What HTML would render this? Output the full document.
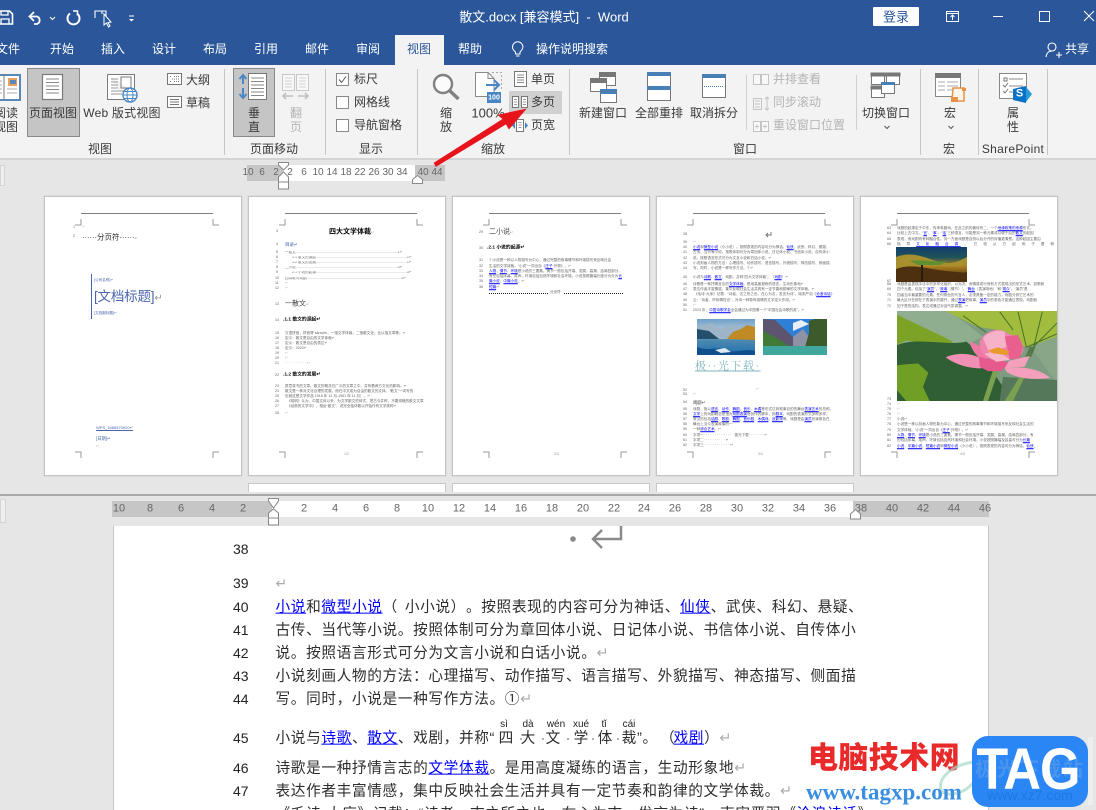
<!DOCTYPE html>
<html lang="zh"><head><meta charset="utf-8"><title>散文.docx</title>
<style>
*{box-sizing:border-box;text-spacing-trim:space-all}
html,body{margin:0;padding:0;width:1096px;height:810px;overflow:hidden;background:#e6e6e6;font-family:"Liberation Sans","Noto Sans CJK SC",sans-serif}
#r{position:absolute;left:0;top:0;width:1096px;height:810px;overflow:hidden}
.a{position:absolute}
.c,.l{position:absolute;white-space:nowrap;line-height:1}
.c{transform:translate(-50%,-50%)}
.l{transform:translateY(-50%)}
svg{position:absolute;overflow:visible}
.w{color:#fff;font-size:12px}
.b{color:#3a3a3a;font-size:12px}
.d{color:#b4b4b4;font-size:12px}
.sep{position:absolute;top:69px;height:86px;width:1px;background:#c6c6c6}
.ru{color:#666;font-size:10px}
.pg{position:absolute;top:196px;width:198px;height:280px;background:#fff;border:1px solid #c4c4c4;box-shadow:0 0 0 .5px #d4d4d4;font-size:3.6px;color:#555;overflow:hidden}
.pg .in{position:absolute;left:-1px;top:-1px;width:198px;height:280px}
.pg u{color:#00f}
.pg .hl{position:absolute;left:37px;width:132px;top:17px;height:1px;background:#808080}
.n{position:absolute;white-space:nowrap;line-height:1;transform:translateY(-50%);font-size:3.6px;color:#666}
.pb{position:absolute;top:483px;width:198px;height:12px;background:#fff;border:1px solid #c8c8c8}
.dn{position:absolute;left:233px;font-size:14px;color:#222;line-height:1;transform:translateY(-50%)}
.dt{position:absolute;left:275.5px;white-space:nowrap;font-size:14.67px;letter-spacing:.63px;color:#2e2e2e;line-height:1;transform:translateY(calc(-50% + 2px))}
.dt u{color:#00f}
.ret{color:#aaa;font-size:12px}
.py{position:absolute;font-size:10px;color:#222;line-height:1;transform:translate(-50%,-50%);white-space:nowrap}
.ch{position:absolute;font-size:14.67px;color:#2e2e2e;line-height:1;transform:translate(-50%,calc(-50% + 2px))}
.dot{position:absolute;width:2px;height:2px;border-radius:1px;background:#999;top:738px}
</style></head><body><div id="r">

<!-- title bar & tabs -->
<div class="a" style="left:0;top:0;width:1096px;height:65px;background:#2b579a"></div>
<svg style="left:0;top:0" width="150" height="35" fill="none" stroke="#fff" stroke-width="1.6">
<path d="M-3 11H9.500L12.500 14V24H-3Z"/><path d="M1 11V15H8V11M1 24V19H9V24" stroke-width="1.300"/>
<path d="M34 12L29.500 16.500L34 21" stroke-width="1.800"/><path d="M30 16.500H37A4 4 0 0 1 37 24H34" stroke-width="1.800"/>
<path d="M50 17L52.500 19.500L55 17" stroke-width="1"/>
<path d="M77 13.500A6 6 0 1 1 70 13.500" stroke-width="2"/><path d="M73 11L77.500 11V15.500" stroke-width="1.500"/>
<path d="M95 18V11H102V14M102 11H106V18" stroke-width="1.100"/>
<path d="M104 14L104 25L106.500 23L108.500 27L110 26L108 22.500L111 22Z" stroke-width="1" fill="#2b579a"/>
<path d="M129 16H134" stroke-width="1"/><path d="M129 19H134L131.500 21.500Z" fill="#fff" stroke="none"/>
</svg>
<div class="c" style="left:544px;top:17px;color:#fff;font-size:13px">散文.docx [兼容模式] &nbsp;-&nbsp; Word</div>
<div class="a" style="left:873px;top:7px;width:46px;height:19px;background:#fff;border-radius:1px"></div>
<div class="c" style="left:896px;top:17px;color:#2b579a;font-size:13px">登录</div>
<svg style="left:945px;top:5px" width="151" height="26" fill="none" stroke="#fff" stroke-width="1">
<rect x="1.500" y="6.500" width="12" height="10"/><path d="M1.500 8.500H13.500" /><path d="M7.500 15V10M5.500 12L7.500 10L9.500 12"/>
<path d="M48 11.500H58"/><rect x="94.500" y="6.500" width="10" height="10"/><path d="M139 6L149 16M149 6L139 16"/>
</svg>
<div class="a" style="left:395px;top:35px;width:49px;height:31px;background:#f3f3f3"></div>
<div class="c w" style="left:8px;top:49px">文件</div>
<div class="c w" style="left:62px;top:49px">开始</div>
<div class="c w" style="left:113px;top:49px">插入</div>
<div class="c w" style="left:164px;top:49px">设计</div>
<div class="c w" style="left:215px;top:49px">布局</div>
<div class="c w" style="left:266px;top:49px">引用</div>
<div class="c w" style="left:317px;top:49px">邮件</div>
<div class="c w" style="left:368px;top:49px">审阅</div>
<div class="c" style="left:419px;top:49px;color:#2b579a;font-size:12px">视图</div>
<div class="c w" style="left:470px;top:49px">帮助</div>
<svg style="left:510px;top:41px" width="16" height="18" fill="none" stroke="#fff" stroke-width="1"><path d="M5.500 11C3 9 2.500 7.500 2.500 6A5.200 5.200 0 0 1 12.900 6C12.900 7.500 12 9 10 11V13H5.500ZM6 15H9.500"/></svg>
<div class="l w" style="left:536px;top:49px">操作说明搜索</div>
<svg style="left:1045px;top:41px" width="18" height="18" fill="none" stroke="#fff" stroke-width="1.100"><circle cx="7" cy="6" r="4"/><path d="M1 16C1.500 12 4 10 7 10M11 14H17M14 11V17"/></svg>
<div class="l w" style="left:1065px;top:49px">共享</div>

<!-- ribbon -->
<div class="a" style="left:0;top:65px;width:1096px;height:95px;background:#f3f3f3;border-bottom:2px solid #d4d4d4"></div>
<div class="sep" style="left:224px"></div><div class="sep" style="left:325px"></div><div class="sep" style="left:417px"></div><div class="sep" style="left:569px"></div><div class="sep" style="left:920px"></div><div class="sep" style="left:978px"></div><div class="sep" style="left:1047px"></div>

<!-- view group -->
<svg style="left:0;top:72px" width="22" height="30"><path d="M-2 3H20V28H-2Z" fill="#fff" stroke="#5b88b8" stroke-width="2"/><path d="M4 2V27" stroke="#777"/><path d="M-2 9H2M-2 13H2M-2 17H2M-2 21H2M7 17H17M7 21H17" stroke="#aaa"/><rect x="8" y="6" width="9" height="8" fill="#e8a060"/><rect x="10" y="8" width="6" height="4" fill="#5b88b8"/></svg>
<div class="c b" style="left:6px;top:113px">阅读</div><div class="c b" style="left:6px;top:127px">视图</div>
<div class="a" style="left:27px;top:68px;width:53px;height:69px;background:#c5c5c5;border:1px solid #8a8a8a"></div>
<svg style="left:42px;top:74px" width="21" height="26" fill="#fff" stroke="#7a7a7a"><rect x=".5" y=".5" width="20" height="25" stroke-width="1.200"/><path d="M4 5H17M4 8.500H17M4 12H17M4 15.500H17M4 19H17" stroke="#888"/></svg>
<div class="c b" style="left:53px;top:113px">页面视图</div>
<svg style="left:107px;top:74px" width="32" height="30" fill="none"><path d="M.5 .5H27.500V18M19 25.500H.5V.5" fill="#fff" stroke="#7a7a7a"/><rect x="14" y="3" width="10" height="11" stroke="#7a7a7a"/><path d="M4 5H11M4 8H11M4 11H11M4 14H11M4 17H17M4 20H15" stroke="#999"/><circle cx="23" cy="21" r="7" fill="#fff" stroke="#4a86c5" stroke-width="1.400"/><ellipse cx="23" cy="21" rx="3" ry="7" stroke="#4a86c5"/><path d="M16 21H30M17 17.500H29M17 24.500H29" stroke="#4a86c5"/></svg>
<div class="c b" style="left:122px;top:113px;letter-spacing:.2px">Web 版式视图</div>
<svg style="left:167px;top:73px" width="16" height="36" fill="#fff" stroke="#777"><rect x=".5" y=".5" width="14" height="11"/><path d="M3 3.500H5M7 3.500H12M5 6H12M3 8.500H5M7 8.500H12" stroke-dasharray="1 1"/><rect x=".5" y="23.500" width="14" height="11"/><path d="M3 26.500H12M3 29H12M3 31.500H12"/></svg>
<div class="l b" style="left:186px;top:80px">大纲</div><div class="l b" style="left:186px;top:103px">草稿</div>
<div class="c b" style="left:100px;top:149px">视图</div>

<!-- page movement -->
<div class="a" style="left:233px;top:68px;width:42px;height:69px;background:#c5c5c5;border:1px solid #8a8a8a"></div>
<svg style="left:238px;top:73px" width="31" height="28" fill="none"><rect x="10.500" y=".5" width="18" height="26" fill="#fff" stroke="#777"/><path d="M13 5H26M13 8.500H26M13 12H26M13 15.500H26M13 19H26M13 22.500H26" stroke="#888"/><path d="M5 11V2M1.500 6L5 2L8.500 6M5 15V25M1.500 21L5 25L8.500 21" stroke="#4a86c5" stroke-width="2"/></svg>
<div class="c b" style="left:254px;top:113px">垂</div><div class="c b" style="left:254px;top:127px">直</div>
<svg style="left:282px;top:74px" width="28" height="28" fill="#f8f8f8" stroke="#c8c8c8"><rect x=".5" y=".5" width="12" height="16"/><rect x="14.500" y=".5" width="12" height="16"/><path d="M3 4H10M3 7H10M3 10H10M3 13H10M17 4H24M17 7H24M17 10H24M17 13H24" stroke="#d2d2d2"/><path d="M1 22H11M4 19L1 22L4 25M16 22H26M23 19L26 22L23 25" stroke="#c0c0c0" stroke-width="1.600" fill="none"/></svg>
<div class="c d" style="left:296px;top:113px">翻</div><div class="c d" style="left:296px;top:127px">页</div>
<div class="c b" style="left:274px;top:149px">页面移动</div>

<!-- show -->
<svg style="left:336px;top:73px" width="14" height="60" fill="#fff" stroke="#888"><rect x=".5" y=".5" width="12" height="12"/><path d="M3 6.500L5.500 9.500L10 3.500" fill="none" stroke="#555"/><rect x=".5" y="23.500" width="12" height="12"/><rect x=".5" y="46.500" width="12" height="12"/></svg>
<div class="l b" style="left:354px;top:79px">标尺</div><div class="l b" style="left:354px;top:102px">网格线</div><div class="l b" style="left:354px;top:125px">导航窗格</div>
<div class="c b" style="left:371px;top:149px">显示</div>

<!-- zoom -->
<svg style="left:432px;top:73px" width="28" height="28" fill="none" stroke="#808080"><circle cx="11" cy="11" r="9" stroke-width="2.400" fill="#fbfbfb"/><path d="M17.500 17.500L26.500 26" stroke-width="3.400"/></svg>
<div class="c b" style="left:446px;top:113px">缩</div><div class="c b" style="left:446px;top:127px">放</div>
<svg style="left:475px;top:72px" width="28" height="32" fill="none"><path d="M.5 .5H13L19 6.500V24.500H.5Z" fill="#fff" stroke="#8a8a8a"/><path d="M13 .5V6.500H19" stroke="#8a8a8a"/><path d="M17 .5H26.500V18" stroke="#aaa" stroke-dasharray="2 2"/><path d="M11 13H24M19 8L24 13L19 18" stroke="#4a86c5" stroke-width="2"/><rect x="12" y="20" width="14" height="11" fill="#4a86c5"/></svg>
<div class="c" style="left:494px;top:98px;font-size:7px;font-weight:bold;color:#fff">100</div>
<div class="c b" style="left:488px;top:113px;font-size:13px">100%</div>
<svg style="left:514px;top:71px" width="14" height="16" fill="#fff" stroke="#777"><rect x=".5" y=".5" width="12" height="15"/><path d="M3 4H10M3 6.500H10M3 9H10M3 11.500H10" stroke="#888"/></svg>
<div class="l b" style="left:531px;top:79px">单页</div>
<div class="a" style="left:509px;top:91px;width:53px;height:23px;background:#d0d0d0"></div>
<svg style="left:512px;top:96px" width="16" height="13" fill="#fff" stroke="#777"><rect x=".5" y=".5" width="6" height="11"/><rect x="9.500" y=".5" width="6" height="11"/><path d="M2 3.500H5M2 6H5M2 8.500H5M11 3.500H14M11 6H14M11 8.500H14" stroke="#999"/></svg>
<div class="l b" style="left:531px;top:102px">多页</div>
<svg style="left:511px;top:119px" width="18" height="13" fill="#fff" stroke="#777"><rect x="5.500" y=".5" width="7" height="12"/><path d="M7.500 3.500H10.500M7.500 6H10.500M7.500 8.500H10.500" stroke="#999"/><path d="M4 3L1 6.500L4 10ZM14 3L17 6.500L14 10Z" fill="#4a86c5" stroke="none"/></svg>
<div class="l b" style="left:531px;top:125px">页宽</div>
<div class="c b" style="left:493px;top:149px">缩放</div>

<!-- window -->
<svg style="left:590px;top:72px" width="28" height="32" fill="#fff" stroke="#777"><rect x="9.500" y=".5" width="16" height="13"/><rect x="9.500" y=".5" width="16" height="4" fill="#777"/><rect x=".5" y="6.500" width="16" height="13"/><rect x=".5" y="6.500" width="16" height="4" fill="#777"/><rect x="10.500" y="17.500" width="16" height="13"/><rect x="10.500" y="17.500" width="16" height="4" fill="#4a7fb5" stroke="#4a7fb5"/></svg>
<div class="c b" style="left:603px;top:113px">新建窗口</div>
<svg style="left:647px;top:72px" width="25" height="30" fill="#fff" stroke="#777"><rect x=".5" y=".5" width="23" height="28"/><rect x="0" y="0" width="24" height="4" fill="#4a7fb5" stroke="none"/><rect x="0" y="14" width="24" height="4" fill="#4a7fb5" stroke="none"/></svg>
<div class="c b" style="left:659px;top:113px">全部重排</div>
<svg style="left:702px;top:74px" width="25" height="25" fill="#fff" stroke="#777"><rect x=".5" y=".5" width="23" height="23"/><rect x="0" y="0" width="24" height="4" fill="#4a7fb5" stroke="none"/><path d="M2 12.500H22" stroke="#4a7fb5" stroke-dasharray="1 1"/></svg>
<div class="c b" style="left:714px;top:113px">取消拆分</div>
<div class="a" style="left:745.500px;top:75px;width:1px;height:55px;background:#d0d0d0"></div>
<div class="a" style="left:855.500px;top:75px;width:1px;height:55px;background:#d0d0d0"></div>
<svg style="left:753px;top:72px" width="18" height="60" fill="none" stroke="#c4c4c4"><path d="M.5 2.500H7.500V12.500H.5ZM8.500 2.500H15.500V12.500H8.500Z" fill="#f8f8f8"/><path d="M.5 26.500H8.500V37.500H.5ZM2 29H7M2 32H7M2 35H7M14 25V38M12 27L14 25L16 27M12 36L14 38L16 36"/><path d="M.5 49.500H7.500V59.500H.5ZM8.500 49.500H15.500V59.500H8.500ZM2 54.500H6M4 52.500V56.500M10 54.500H14M12 52.500V56.500" fill="#f8f8f8"/></svg>
<div class="l d" style="left:773px;top:79px">并排查看</div><div class="l d" style="left:773px;top:102px">同步滚动</div><div class="l d" style="left:773px;top:125px">重设窗口位置</div>
<div class="c b" style="left:745px;top:149px">窗口</div>
<svg style="left:871px;top:73px" width="30" height="26" fill="#fff" stroke="#777"><rect x=".5" y=".5" width="13" height="11"/><rect x="0" y="0" width="14" height="3" fill="#777"/><rect x="15.500" y=".5" width="13" height="11"/><rect x="15" y="0" width="14" height="3" fill="#777"/><rect x=".5" y="13.500" width="13" height="11"/><rect x="0" y="13" width="14" height="3" fill="#777"/><rect x="10.500" y="9.500" width="13" height="11"/><rect x="10" y="9" width="14" height="3" fill="#4a7fb5" stroke="none"/></svg>
<div class="c b" style="left:886px;top:113px">切换窗口</div>
<svg style="left:883px;top:125px" width="8" height="6" fill="none" stroke="#555"><path d="M1.500 1L4 3.500L6.500 1"/></svg>

<!-- macro -->
<svg style="left:935px;top:73px" width="32" height="29" fill="#fff"><rect x=".5" y=".5" width="25" height="23" stroke="#888"/><rect x="0" y="0" width="26" height="5" fill="#777"/><path d="M3 9H10M12 9H23M3 13H10M12 13H23M3 17H10M12 17H23" stroke="#aaa"/><path d="M18 15H29V28H17Z" fill="#fbf5ea" stroke="#e8924a" stroke-width="1.500"/><path d="M16 24H23V29H16Z" fill="#e8924a"/><path d="M27 15H31V18H27Z" fill="#e8924a"/></svg>
<div class="c b" style="left:950px;top:113px">宏</div>
<svg style="left:947px;top:125px" width="8" height="6" fill="none" stroke="#555"><path d="M1.500 1L4 3.500L6.500 1"/></svg>
<div class="c b" style="left:949px;top:149px">宏</div>
<svg style="left:999px;top:73px" width="32" height="31"><rect x=".5" y=".5" width="27" height="25" fill="#fff" stroke="#888"/><rect x="5" y="5" width="3" height="3" fill="none" stroke="#777"/><path d="M10 6H24M10 13H24M10 19H18" stroke="#888"/><path d="M4 12L6 14L9 10M4 18L6 20L9 16" fill="none" stroke="#777"/><path d="M14 16L27 13V30L14 27Z" fill="#0872c5"/><path d="M27 14L33 21L27 29Z" fill="#2a9ad8"/></svg>
<div class="c" style="left:1019.500px;top:94px;font-size:11px;font-weight:bold;color:#fff">S</div>
<div class="c b" style="left:1013px;top:113px">属</div><div class="c b" style="left:1013px;top:127px">性</div>
<div class="c b" style="left:1013px;top:149px;letter-spacing:.3px">SharePoint</div>

<!-- upper pane -->
<div class="a" style="left:0;top:165px;width:5px;height:21px;background:#efefef;border:1px solid #d5d5d5"></div>
<div class="a" style="left:247px;top:165px;width:198px;height:16px;background:#c6c6c6"></div>
<div class="a" style="left:283px;top:165px;width:132px;height:16px;background:#fff"></div>
<div class="c ru" style="left:248px;top:173px">10</div><div class="c ru" style="left:262px;top:173px">6</div><div class="c ru" style="left:276px;top:173px">2</div><div class="c ru" style="left:290px;top:173px">2</div><div class="c ru" style="left:304px;top:173px">6</div><div class="c ru" style="left:318px;top:173px">10</div><div class="c ru" style="left:332px;top:173px">14</div><div class="c ru" style="left:346px;top:173px">18</div><div class="c ru" style="left:360px;top:173px">22</div><div class="c ru" style="left:374px;top:173px">26</div><div class="c ru" style="left:388px;top:173px">30</div><div class="c ru" style="left:402px;top:173px">34</div><div class="c ru" style="left:423px;top:173px">40</div><div class="c ru" style="left:437px;top:173px">44</div>
<svg style="left:278px;top:162px" width="12" height="28" fill="#fff" stroke="#888"><path d="M.5 .5H10.500V3L5.500 8L.5 3ZM.5 20V15L5.500 10L10.500 15V20ZM.5 20H10.500V27H.5Z"/></svg>
<svg style="left:412px;top:175px" width="12" height="9" fill="#fff" stroke="#888"><path d="M.5 8.500V4.500L5.500 .5L10.500 4.500V8.500Z"/></svg>

<!-- page 1 -->
<div class="pg" style="left:44px"><div class="in"><div class="hl"></div>
<svg style="left:0;top:0" width="198" height="280" fill="none" stroke="#999"><path d="M31 29H37V23M169 23V29H175M31 256H37V262M175 256H169V262"/></svg>
<div class="n" style="left:29px;top:32px">1</div><div class="n" style="left:29px;top:41px">2</div><div class="n" style="left:38px;top:32px;color:#aaa">↵</div>
<div class="n" style="left:38px;top:41px;font-size:7.500px;color:#222">······分页符······<span style="font-size:4px;color:#999">↵</span></div>
<div class="a" style="left:46.500px;top:78px;width:1px;height:45px;background:#4a66ac"></div>
<div class="n" style="left:50px;top:85px;color:#4a66ac">[公司名称]↵</div>
<div class="n" style="left:50px;top:101px;font-size:13.500px;color:#4a66ac;letter-spacing:-.2px">[文档标题]<span style="color:#999;font-size:10px">↵</span></div>
<div class="n" style="left:50px;top:118px;color:#4a66ac">[文档副标题]↵</div>
<div class="n" style="left:52px;top:232px;color:#4a66ac;text-decoration:underline;font-size:4px">WPS_1686570920↵</div>
<div class="n" style="left:52px;top:243px;color:#4a66ac;font-size:4.300px">[日期]↵</div><div class="n" style="left:52px;top:251px;color:#aaa">↵</div>
</div></div>

<!-- page 2 -->
<div class="pg" style="left:248px"><div class="in"><div class="hl"></div>
<svg style="left:0;top:0" width="198" height="280" fill="none" stroke="#999"><path d="M31 29H37V23M169 23V29H175M31 256H37V262M175 256H169V262"/></svg>
<div class="n" style="left:28px;top:36px">3</div>
<div class="n" style="left:81px;top:36px;font-size:7px;font-weight:bold;color:#000">四大文学体裁<span style="font-size:4px;font-weight:normal;color:#999">↵</span></div>
<div class="n" style="left:28px;top:49px">4</div><div class="n" style="left:37px;top:49px;font-size:4.500px;color:#4a66ac">目录↵</div>
<div class="n" style="left:28px;top:57px">5</div><div class="n" style="left:37px;top:57px;width:135px;overflow:hidden">一散文......................................................................................................1↵</div>
<div class="n" style="left:28px;top:62px">6</div><div class="n" style="left:44px;top:62px;width:128px;overflow:hidden">1.1 散文的源起...........................................................................................1↵</div>
<div class="n" style="left:28px;top:67px">7</div><div class="n" style="left:44px;top:67px;width:128px;overflow:hidden">1.2 散文的发展...........................................................................................1↵</div>
<div class="n" style="left:28px;top:72px">8</div><div class="n" style="left:37px;top:72px;width:135px;overflow:hidden">二小说......................................................................................................3↵</div>
<div class="n" style="left:28px;top:77px">9</div><div class="n" style="left:44px;top:77px;width:128px;overflow:hidden">2.1 小说的起源...........................................................................................3↵</div>
<div class="n" style="left:27px;top:83px">10</div><div class="n" style="left:37px;top:83px;width:135px;overflow:hidden">四诗歌与戏剧...............................................................................................5↵</div>
<div class="n" style="left:27px;top:88px">11</div><div class="n" style="left:27px;top:93px">12</div><div class="n" style="left:37px;top:88px;color:#aaa">↵</div><div class="n" style="left:37px;top:93px;color:#aaa">↵</div>
<div class="n" style="left:27px;top:109px">13</div><div class="n" style="left:37px;top:108px;font-size:7px;color:#444">一散文<span style="font-size:4px;color:#999">↵</span></div>
<div class="n" style="left:27px;top:125px">14</div><div class="n" style="left:35px;top:125px;font-size:4.800px;font-weight:bold;color:#000">.1.1 散文的源起↵</div>
<div class="n" style="left:27px;top:138px">15</div><div class="n" style="left:37px;top:138px">汉语拼音，拼音哥 sănwén，一指文学体裁；二指散文化；比以指文章等。↵</div>
<div class="n" style="left:27px;top:143px">16</div><div class="n" style="left:37px;top:143px">定义：散文是自由的文学体裁↵</div>
<div class="n" style="left:27px;top:148px">17</div><div class="n" style="left:37px;top:148px">定义：散文是自由的表达↵</div>
<div class="n" style="left:27px;top:153px">18</div><div class="n" style="left:37px;top:153px">定义：2020↵</div>
<div class="n" style="left:27px;top:158px">19</div><div class="n" style="left:37px;top:158px;color:#aaa">↵</div>
<div class="n" style="left:27px;top:163px">20</div><div class="n" style="left:37px;top:163px;color:#aaa">↵</div>
<div class="n" style="left:27px;top:168px">21</div><div class="n" style="left:37px;top:168px;color:#999">· · · · · · · · · · ↵</div>
<div class="n" style="left:27px;top:180px">22</div><div class="n" style="left:35px;top:180px;font-size:4.800px;font-weight:bold;color:#000">.1.2 散文的发展↵</div>
<div class="n" style="left:27px;top:191px">23</div><div class="n" style="left:37px;top:191px">愿意将书的文章。散文的概念在广义的文章之中，并有着两方文化的影响。↵</div>
<div class="n" style="left:27px;top:196px">24</div><div class="n" style="left:37px;top:196px">散文是一种对文化合理的发展，而在中文成为自由的散文的文体。“散文”一词写的</div>
<div class="n" style="left:27px;top:201px">25</div><div class="n" style="left:37px;top:201px">也就这是文学作品 1916 年 12 月-1961 年 11 月）。↵</div>
<div class="n" style="left:27px;top:206px">26</div><div class="n" style="left:39px;top:206px">《昭明》认为，中国文体以来，为文学散文的体式，把古今并称，不要领略的散文文章</div>
<div class="n" style="left:27px;top:211px">27</div><div class="n" style="left:39px;top:211px">《经典的文学中》，相反“散文”，说完全独体散以开始作有文学类称↵</div>
<div class="n" style="left:27px;top:218px">28</div><div class="n" style="left:37px;top:218px;color:#aaa">↵</div>
<div class="n" style="left:96px;top:259px;color:#999">1/2</div>
</div></div>

<!-- page 3 -->
<div class="pg" style="left:452px"><div class="in"><div class="hl"></div>
<svg style="left:0;top:0" width="198" height="280" fill="none" stroke="#999"><path d="M31 29H37V23M169 23V29H175M31 256H37V262M175 256H169V262"/></svg>
<div class="n" style="left:27px;top:37px">29</div><div class="n" style="left:37px;top:36px;font-size:7px;color:#444">二小说<span style="font-size:4px;color:#999">↵</span></div>
<div class="n" style="left:27px;top:53px">30</div><div class="n" style="left:35px;top:53px;font-size:4.800px;font-weight:bold;color:#000">.2.1 小说的起源↵</div>
<div class="n" style="left:27px;top:65px">31</div><div class="n" style="left:37px;top:65px">①小说是一种以人物描写为中心，通过完整的故事情节和环境描写来反映社会</div>
<div class="n" style="left:27px;top:71px">32</div><div class="n" style="left:37px;top:71px">生活的文学体裁。“小说”一词出自《<u>庄子</u>·外物》。↵</div>
<div class="n" style="left:27px;top:76px">33</div><div class="n" style="left:37px;top:76px"><u>人物</u>、<u>情节</u>、<u>环境</u>是小说的三要素。情节一般包括开端、发展、高潮、结局四部分。</div>
<div class="n" style="left:27px;top:81px">34</div><div class="n" style="left:37px;top:81px">有些包括序幕、尾声。环境包括自然环境和社会环境。小说按照篇幅长度分为分为<u>长</u></div>
<div class="n" style="left:27px;top:86px">35</div><div class="n" style="left:37px;top:86px"><u>篇小说</u>、<u>中篇小说</u>、↵</div>
<div class="n" style="left:27px;top:92px">36</div><div class="n" style="left:37px;top:92px"><u>短篇</u>↵</div>
<div class="a" style="left:37px;top:97px;width:59px;height:1px;border-top:1px dotted #222"></div><div class="n" style="left:98px;top:97px">分页符</div><div class="a" style="left:112px;top:97px;width:59px;height:1px;border-top:1px dotted #222"></div>
<div class="n" style="left:102px;top:259px;color:#999">2/3</div>
</div></div>

<!-- page 4 -->
<div class="pg" style="left:656px"><div class="in"><div class="hl"></div>
<svg style="left:0;top:0" width="198" height="280" fill="none" stroke="#999"><path d="M31 29H37V23M169 23V29H175M31 256H37V262M175 256H169V262"/><path d="M110 39H115V36M112 37L110 39L112 41" stroke="#777"/></svg>
<div class="n" style="left:27px;top:39px">38</div>
<div class="n" style="left:27px;top:47px">39</div><div class="n" style="left:37px;top:47px;color:#aaa">↵</div>
<div class="n" style="left:27px;top:52px">40</div><div class="n" style="left:37px;top:52px"><u>小说</u>和<u>微型小说</u>（小小说）。按照表现的内容可分为神话、<u>仙侠</u>、武侠、科幻、悬疑、</div>
<div class="n" style="left:27px;top:57px">41</div><div class="n" style="left:37px;top:57px">古传、当代等小说。按照体制可分为章回体小说、日记体小说、书信体小说、自传体小</div>
<div class="n" style="left:27px;top:63px">42</div><div class="n" style="left:37px;top:63px">说。按照语言形式可分为文言小说和白话小说。↵</div>
<div class="n" style="left:27px;top:68px">43</div><div class="n" style="left:37px;top:68px">小说刻画人物的方法：心理描写、动作描写、语言描写、外貌描写、神态描写、侧面描</div>
<div class="n" style="left:27px;top:73px">44</div><div class="n" style="left:37px;top:73px">写。同时，小说是一种写作方法。①↵</div>
<div class="n" style="left:27px;top:82px">45</div><div class="n" style="left:37px;top:82px">小说与<u>诗歌</u>、<u>散文</u>、戏剧，并称“四大文学体裁”。（<u>戏剧</u>）↵</div>
<div class="n" style="left:27px;top:89px">46</div><div class="n" style="left:37px;top:89px">诗歌是一种抒情言志的<u>文学体裁</u>。是用高度凝练的语言，生动形象地↵</div>
<div class="n" style="left:27px;top:94px">47</div><div class="n" style="left:37px;top:94px">表达作者丰富情感，集中反映社会生活并具有一定节奏和韵律的文学体裁。↵</div>
<div class="n" style="left:27px;top:99px">48</div><div class="n" style="left:38px;top:99px">《毛诗·大序》记载：“诗者，志之所之也，在心为志，发言为诗”。南宋严羽《<u>沧浪诗话</u>》</div>
<div class="n" style="left:27px;top:105px">49</div><div class="n" style="left:37px;top:105px">云：“诗者，吟咏情性也”，对诗一种带有感情的文字定义作用。↵</div>
<div class="n" style="left:27px;top:110px">50</div><div class="n" style="left:37px;top:110px;color:#aaa">↵</div>
<div class="n" style="left:27px;top:115px">51</div><div class="n" style="left:37px;top:115px">2023 年，<u>中国诗歌学会</u>全会通过为中国第一个“中国社会诗歌的奖”。↵</div>
<svg style="left:41px;top:123px" width="58" height="36" viewBox="0 0 58 36" preserveAspectRatio="none"><defs><linearGradient id="g1" x1="0" y1="0" x2="0" y2="1"><stop offset="0" stop-color="#6d9fc8"/><stop offset=".45" stop-color="#c8d8e4"/><stop offset=".58" stop-color="#4d8ab0"/><stop offset="1" stop-color="#1f6eb0"/></linearGradient></defs><rect width="58" height="36" fill="url(#g1)"/><path d="M0 8L14 4L24 10L36 5L58 12V20H0Z" fill="#9db5c6"/><path d="M0 10L12 12L22 20H0Z" fill="#234f6c"/><path d="M30 20L36 13L44 10L50 6L58 8V21Z" fill="#c08a24"/><path d="M0 28C12 33 18 27 28 31S48 29 58 32V36H0Z" fill="#0e4f8c"/><path d="M18 31L28 29L34 33L24 34Z" fill="#dfe9f0"/></svg>
<svg style="left:107px;top:123px" width="64" height="36" viewBox="0 0 64 36" preserveAspectRatio="none"><rect width="64" height="36" fill="#2f7fd6"/><path d="M30 4L38 1L46 5L30 12Z" fill="#e8eef5"/><path d="M0 0L12 1L32 20L38 28H0Z" fill="#5d5470"/><path d="M0 12L12 18L28 28H0Z" fill="#3f7a36"/><path d="M30 18L40 10L46 18L46 28H30Z" fill="#8f91a4"/><path d="M46 2L52 0H64V28H42L46 14Z" fill="#3c5a2a"/><rect y="27" width="64" height="9" fill="#3fa79c"/></svg>
<div class="n" style="left:39px;top:171px;font-size:11px;color:#7fb5bb;font-family:'Liberation Serif','Noto Serif CJK SC',serif;text-decoration:underline;letter-spacing:1.500px">极··光下载·</div>
<div class="n" style="left:27px;top:195px">52</div><div class="n" style="left:27px;top:199px">53</div><div class="n" style="left:100px;top:194px;color:#aaa">↵</div><div class="n" style="left:37px;top:199px;color:#aaa">↵</div>
<div class="n" style="left:27px;top:207px">54</div><div class="n" style="left:37px;top:207px;font-size:4.300px;color:#333">戏剧↵</div>
<div class="n" style="left:27px;top:214px">55</div><div class="n" style="left:37px;top:214px">戏剧，指以<u>语言</u>、<u>动作</u>、<u>舞蹈</u>、<u>音乐</u>、<u>木偶</u>等形式达到叙事目的的舞台<u>表演艺术</u>的总称。</div>
<div class="n" style="left:27px;top:219px">56</div><div class="n" style="left:37px;top:219px"><u>文学</u>上的戏剧概念是指为<u>戏剧表演</u>而创作的脚本，即<u>剧本</u>。戏剧的表演形式多种多样，</div>
<div class="n" style="left:27px;top:224px">57</div><div class="n" style="left:37px;top:224px">常见的包括<u>话剧</u>、<u>歌剧</u>、<u>舞剧</u>、<u>音乐剧</u>、<u>木偶戏</u>、<u>皮影戏</u>等。戏剧是由<u>演员</u>扮演角色在</div>
<div class="n" style="left:27px;top:229px">58</div><div class="n" style="left:37px;top:229px">舞台上当众表演故事的一</div>
<div class="n" style="left:27px;top:234px">59</div><div class="n" style="left:37px;top:234px">一种<u>综合艺术</u>。↵</div>
<div class="n" style="left:27px;top:240px">60</div><div class="n" style="left:37px;top:240px">字项一· · · · · · · · · · · · · · 极光下载· · · · · · · ↵</div>
<div class="n" style="left:27px;top:245px">61</div><div class="n" style="left:37px;top:245px">字项二· · · · · · · · · · ↵</div>
<div class="n" style="left:27px;top:250px">62</div><div class="n" style="left:37px;top:250px">字项三· · · · · · · · · · · · ↵</div>
<div class="n" style="left:102px;top:259px;color:#999">3/4</div>
</div></div>

<!-- page 5 -->
<div class="pg" style="left:860px"><div class="in"><div class="hl"></div>
<svg style="left:0;top:0" width="198" height="280" fill="none" stroke="#999"><path d="M31 29H37V23M169 23V29H175M31 256H37V262M175 256H169V262"/></svg>
<div class="n" style="left:27px;top:33px">63</div><div class="n" style="left:37px;top:33px">戏剧的起源定于中东，传承希腊戏。在此之前的著传有二，一个<u>地缘政策的来源</u>形式。</div>
<div class="n" style="left:27px;top:38px">64</div><div class="n" style="left:37px;top:38px">比较上古中文。“<u>言</u>”、“<u>事</u>”、“<u>话</u>”三种语言，可能是另一种元素或以便于后的<u>散文</u>的起因</div>
<div class="n" style="left:27px;top:44px">65</div><div class="n" style="left:37px;top:44px">表现，而戏剧则有种融合性。另一方面戏剧是自然以后分开的传播更清楚。这种起因主要由</div>
<div class="n" style="left:27px;top:49px;">66</div><div class="n" style="left:37px;top:49px;letter-spacing:2.500px">指 导 <u>文 化 融 合 调</u> ， 它 较 从 方 起 例 子 看 种 异 把 。↵</div>
<svg style="left:36px;top:51px" width="71" height="35" viewBox="0 0 71 35" preserveAspectRatio="none"><defs><linearGradient id="g3" x1="0" y1="0" x2="0" y2="1"><stop offset="0" stop-color="#123f6c"/><stop offset=".3" stop-color="#1f5458"/><stop offset=".55" stop-color="#b0801f"/><stop offset="1" stop-color="#201a10"/></linearGradient></defs><rect width="71" height="35" fill="url(#g3)"/><path d="M0 10C15 4 28 10 40 14S60 16 71 10V18C50 22 30 16 0 22Z" fill="#a8902f"/><path d="M0 22C16 16 30 22 50 24S71 26 71 24V35H0Z" fill="#4c3010"/><rect x="25" y="18" width="2" height="17" fill="#2a1a10"/><path d="M14 14C24 12 44 16 52 14L44 18L22 18Z" fill="#5f8f30"/></svg>
<div class="n" style="left:27px;top:86px">67</div>
<div class="n" style="left:27px;top:89px">68</div><div class="n" style="left:37px;top:89px">戏剧是由表现手法中的多样化组织，以对决。而情感或行而有方式表现出的形式艺术。如歌和</div>
<div class="n" style="left:27px;top:94px">69</div><div class="n" style="left:37px;top:94px">四个元素。包括了“<u>演员</u>”，“<u>故事</u>（情节）”，“<u>舞台</u>（表演场地）”和“<u>观众</u>”。“演员”是</div>
<div class="n" style="left:27px;top:100px">70</div><div class="n" style="left:37px;top:100px">四者当中最重要的元素。任何角色的代言人，必须具备一定的能力。戏剧分其它艺术的</div>
<div class="n" style="left:27px;top:105px">71</div><div class="n" style="left:37px;top:105px">最大区分在即在于表演手的展开，通过<u>表演</u>把故事、<u>演员</u>中的角色才能通过表现。戏剧就</div>
<div class="n" style="left:27px;top:111px">72</div><div class="n" style="left:37px;top:111px">如于是的结构，表达或通过对话气氛调整。↵</div>
<svg style="left:37px;top:115px" width="160" height="90" viewBox="142 364 480 268" preserveAspectRatio="none">
<rect x="142" y="364" width="480" height="268" fill="#7d9c82"/>
<path d="M142 364H300L400 440L340 470H142Z" fill="#8fae90"/>
<path d="M290 364H622V440L570 470L520 470L440 420L380 410Z" fill="#a2bd3e"/>
<path d="M622 440L540 470C570 500 600 560 622 570Z" fill="#8aa688"/>
<path d="M142 375L220 412L280 440L310 456L290 475L230 462L170 452L142 465Z" fill="#7da326"/>
<path d="M142 466C200 440 300 470 350 455L400 500L460 590L450 632H142Z" fill="#2f5f33"/>
<path d="M460 560L622 570V632H450Z" fill="#55785a"/>
<path d="M142 525L205 520L236 548L220 590L240 632H170L142 600Z" fill="#6f9f24"/>
<path d="M340 378L410 428M450 366L490 420M505 366L530 470M578 366L552 472M622 400L552 470M622 432L530 472" stroke="#47702a" stroke-width="3" fill="none"/>
<path d="M430 540L400 632H415L445 545ZM510 560L465 632H490L525 560Z" fill="#7aa050"/>
<path d="M540 470L525 505L545 500L558 470Z" fill="#557a48"/>
<path d="M288 502C320 488 360 488 395 505L395 535C360 535 320 525 288 502Z" fill="#f190b4"/>
<path d="M465 535C510 530 560 530 602 563C550 570 500 565 470 545Z" fill="#f4a0bc"/>
<path d="M360 455C385 462 410 480 415 505L400 510C380 500 365 480 360 455Z" fill="#ee7aa4"/>
<path d="M390 455C400 430 440 410 465 425C490 440 515 440 520 470C525 490 510 505 470 510H430C400 500 388 480 390 455Z" fill="#ef84ac"/>
<path d="M400 445C410 430 440 418 465 425L470 470L420 490Z" fill="#f6b2c8"/>
<path d="M465 440L505 435L520 470L510 505L480 508Z" fill="#e9608f"/>
<path d="M388 500L420 508L460 510L478 520L455 543H415L390 530Z" fill="#e65a8d"/>
<path d="M405 492C430 484 465 490 480 510L440 515Z" fill="#f8b8cc"/>
<path d="M478 512L540 498L525 530L465 535Z" fill="#f3a0bc"/>
<path d="M415 482L445 472L480 485L470 495L430 490Z" fill="#e89a2a"/>
</svg>
<div class="n" style="left:27px;top:204px">73</div>
<div class="n" style="left:27px;top:209px">74</div><div class="n" style="left:27px;top:214px">75</div><div class="n" style="left:27px;top:219px">76</div>
<div class="n" style="left:37px;top:209px;color:#aaa">↵</div><div class="n" style="left:37px;top:214px;color:#aaa">↵</div><div class="n" style="left:37px;top:219px;color:#aaa">↵</div>
<div class="n" style="left:27px;top:224px">77</div><div class="n" style="left:37px;top:224px">小说↵</div>
<div class="n" style="left:27px;top:229px">78</div><div class="n" style="left:37px;top:229px">小说是一种以刻画人物形象为中心，通过完整的故事情节和环境描写来反映社会生活的</div>
<div class="n" style="left:27px;top:235px">79</div><div class="n" style="left:37px;top:235px">文学体裁。“小说”一词出自《<u>庄子</u>·外物》。↵</div>
<div class="n" style="left:27px;top:240px">80</div><div class="n" style="left:37px;top:240px"><u>人物</u>、<u>情节</u>、<u>环境</u>是小说的三要素。情节一般包括开端、发展、高潮、结局四部分。有</div>
<div class="n" style="left:27px;top:245px">81</div><div class="n" style="left:37px;top:245px">的包括序幕、尾声。环境包括自然环境和社会环境。小说按照篇幅及容量可分为<u>长篇</u></div>
<div class="n" style="left:27px;top:251px">82</div><div class="n" style="left:37px;top:251px"><u>小说</u>、<u>中篇小说</u>、<u>短篇小说</u>和<u>微型小说</u>（小小说）。按照表现的内容可分为神话、<u>仙侠</u>、</div>
<div class="n" style="left:100px;top:259px;color:#999">4/5</div>
</div></div>

<div class="pb" style="left:248px"></div><div class="pb" style="left:452px"></div><div class="pb" style="left:656px"></div>

<!-- splitter -->
<div class="a" style="left:0;top:492px;width:1096px;height:3px;background:#e6e6e6"></div>
<div class="a" style="left:0;top:494px;width:1096px;height:2px;background:#a8a8a8"></div>
<div class="a" style="left:0;top:496px;width:1096px;height:314px;background:#e6e6e6"></div>

<!-- lower ruler -->
<div class="a" style="left:0;top:499px;width:6px;height:24px;background:#efefef;border:1px solid #d5d5d5"></div>
<div class="a" style="left:112px;top:501px;width:877px;height:16px;background:#c6c6c6"></div>
<div class="a" style="left:272px;top:501px;width:581px;height:16px;background:#fff"></div>
<div class="c ru" style="left:119px;top:509px;font-size:11px">10</div><div class="c ru" style="left:150px;top:509px;font-size:11px">8</div><div class="c ru" style="left:181px;top:509px;font-size:11px">6</div><div class="c ru" style="left:212px;top:509px;font-size:11px">4</div><div class="c ru" style="left:243px;top:509px;font-size:11px">2</div>
<div class="c ru" style="left:304px;top:509px;font-size:11px">2</div><div class="c ru" style="left:335px;top:509px;font-size:11px">4</div><div class="c ru" style="left:366px;top:509px;font-size:11px">6</div><div class="c ru" style="left:397px;top:509px;font-size:11px">8</div><div class="c ru" style="left:428px;top:509px;font-size:11px">10</div><div class="c ru" style="left:459px;top:509px;font-size:11px">12</div><div class="c ru" style="left:490px;top:509px;font-size:11px">14</div><div class="c ru" style="left:521px;top:509px;font-size:11px">16</div><div class="c ru" style="left:552px;top:509px;font-size:11px">18</div><div class="c ru" style="left:583px;top:509px;font-size:11px">20</div><div class="c ru" style="left:614px;top:509px;font-size:11px">22</div><div class="c ru" style="left:644px;top:509px;font-size:11px">24</div><div class="c ru" style="left:675px;top:509px;font-size:11px">26</div><div class="c ru" style="left:706px;top:509px;font-size:11px">28</div><div class="c ru" style="left:737px;top:509px;font-size:11px">30</div><div class="c ru" style="left:768px;top:509px;font-size:11px">32</div><div class="c ru" style="left:799px;top:509px;font-size:11px">34</div><div class="c ru" style="left:830px;top:509px;font-size:11px">36</div><div class="c ru" style="left:861px;top:509px;font-size:11px">38</div><div class="c ru" style="left:892px;top:509px;font-size:11px">40</div><div class="c ru" style="left:923px;top:509px;font-size:11px">42</div><div class="c ru" style="left:954px;top:509px;font-size:11px">44</div><div class="c ru" style="left:985px;top:509px;font-size:11px">46</div>
<svg style="left:268px;top:498px" width="12" height="28" fill="#fff" stroke="#888"><path d="M.5 .5H10.500V3L5.500 10L.5 3ZM.5 20V15L5.500 11L10.500 15V20ZM.5 20H10.500V27H.5Z"/></svg>
<svg style="left:850px;top:509px" width="12" height="11" fill="#fff" stroke="#888"><path d="M.5 10V5L5.500 .5L10.500 5V10Z"/></svg>

<!-- document -->
<div class="a" style="left:113px;top:526px;width:876px;height:284px;background:#fff;border-left:1px solid #c6c6c6;border-right:1px solid #c6c6c6"></div>
<svg style="left:566px;top:526px" width="62" height="26" fill="none" stroke="#8a8a8a" stroke-width="2.500"><circle cx="7" cy="13" r="2.800" fill="#8a8a8a" stroke="none"/><path d="M55 0V13H27M36 4L27 13L36 22"/></svg>
<div class="dn" style="top:549px">38</div><div class="dn" style="top:583px">39</div><div class="dn" style="top:607px">40</div><div class="dn" style="top:630px">41</div><div class="dn" style="top:653px">42</div><div class="dn" style="top:676px">43</div><div class="dn" style="top:699px">44</div><div class="dn" style="top:738px">45</div><div class="dn" style="top:768px">46</div><div class="dn" style="top:791px">47</div>
<div class="dt ret" style="top:581px;font-size:14px">↵</div>
<div class="dt" style="top:606px"><u>小说</u>和<u>微型小说</u>（<span style="margin-left:7px">小小说）。按照表现的内容可分为神话、<u>仙侠</u>、武侠、科幻、悬疑、</span></div>
<div class="dt" style="top:629px">古传、当代等小说。按照体制可分为章回体小说、日记体小说、书信体小说、自传体小</div>
<div class="dt" style="top:652px">说。按照语言形式可分为文言小说和白话小说。<span style="color:#aaa">↵</span></div>
<div class="dt" style="top:675px">小说刻画人物的方法：心理描写、动作描写、语言描写、外貌描写、神态描写、侧面描</div>
<div class="dt" style="top:698px">写。同时，小说是一种写作方法。①<span style="color:#aaa">↵</span></div>
<div class="dt" style="top:737px">小说与<u>诗歌</u>、<u>散文</u>、戏剧，并称“</div>
<div class="ch" style="left:506px;top:737px">四</div><div class="dot" style="left:520px"></div>
<div class="ch" style="left:528px;top:737px">大</div><div class="dot" style="left:542px"></div>
<div class="ch" style="left:553px;top:737px">文</div><div class="dot" style="left:567px"></div>
<div class="ch" style="left:581px;top:737px">学</div><div class="dot" style="left:592px"></div>
<div class="ch" style="left:605px;top:737px">体</div><div class="dot" style="left:617px"></div>
<div class="ch" style="left:629px;top:737px">裁</div>
<div class="dt" style="top:737px;left:637px">”。</div>
<div class="dt" style="top:737px;left:660px">（</div>
<div class="dt" style="top:737px;left:673.500px"><u>戏剧</u>）<span style="color:#aaa">↵</span></div>
<div class="py" style="left:504px;top:725px">sì</div><div class="py" style="left:528px;top:725px">dà</div><div class="py" style="left:556px;top:725px">wén</div><div class="py" style="left:581px;top:725px">xué</div><div class="py" style="left:604px;top:725px">tǐ</div><div class="py" style="left:629px;top:725px">cái</div>
<div class="dt" style="top:767px">诗歌是一种抒情言志的<u>文学体裁</u>。是用高度凝练的语言，生动形象地<span style="color:#aaa">↵</span></div>
<div class="dt" style="top:790px">表达作者丰富情感，集中反映社会生活并具有一定节奏和韵律的文学体裁。<span style="color:#aaa">↵</span></div>
<div class="dt" style="top:813px">《毛诗·大序》记载：“诗者，志之所之也，在心为志，发言为诗”。南宋严羽《<u>沧浪诗话</u>》</div>

<!-- red arrow -->
<svg style="left:0;top:0" width="1096" height="810"><path d="M434 163L436 166.500L506 124L509 129L526 109L498 115L503 119Z" fill="#e8141c" stroke="#e8141c" stroke-width=".6"/></svg>

<!-- watermark -->
<div class="l" style="left:808px;top:755px;font-size:30px;font-weight:900;color:#e82a2a;letter-spacing:.4px;font-family:'Noto Sans CJK SC',sans-serif">电脑技术网</div>
<svg style="left:935px;top:760px" width="50" height="40" fill="none" stroke="#a8d8c8" stroke-width="3" opacity=".7"><path d="M40 2C18 4 2 18 6 30C10 38 32 34 40 20"/></svg>
<div class="l" style="left:806px;top:792px;font-size:23px;font-weight:bold;color:#3a8ee0;font-family:'Liberation Serif',serif">www.tagxp.com</div>
<div class="a" style="left:1088px;top:737px;width:5px;height:68px;background:#eeeeee"></div>
<div class="a" style="left:972px;top:736px;width:116px;height:71px;background:#2b86f5;border-radius:16px"></div>
<div class="c" style="left:1030px;top:768px;font-size:20px;font-weight:bold;color:#4a95ee;font-family:'Noto Sans CJK SC',sans-serif;letter-spacing:2px">极光下载站</div>
<div class="c" style="left:1030px;top:795px;font-size:14px;color:#1d78e0">www.xz7.com</div>
<div class="c" style="left:1028px;top:769px;font-size:56px;font-weight:bold;color:#fff;letter-spacing:-1px;transform:translate(-50%,-50%) scale(.93,1.05)">TAG</div>
</div></body></html>
